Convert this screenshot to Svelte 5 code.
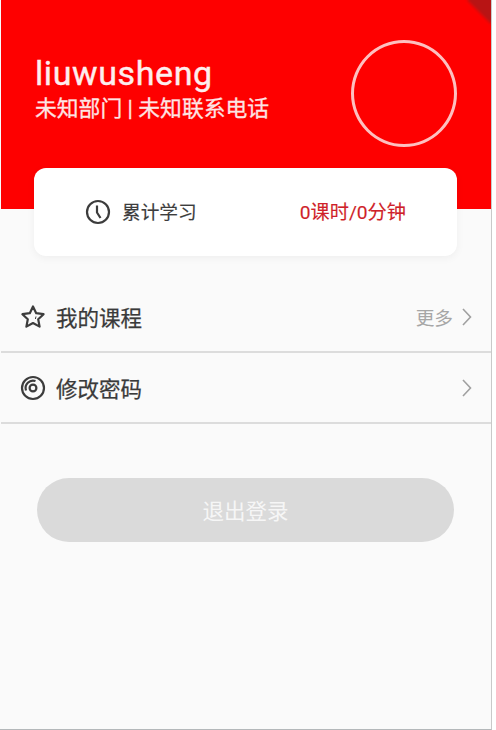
<script>
  const rows = [
    { title: "我的课程", more: "更多", icon: "star" },
    { title: "修改密码", more: "", icon: "disc" }
  ];
</script>

<div class="page">
  <header class="top">
    <span class="corner"></span>
    <div class="who">
      <div class="name">liuwusheng</div>
      <div class="dept">未知部门 | 未知联系电话</div>
    </div>
    <div class="avatar"></div>
  </header>

  <section class="card">
    <div class="card-left">
      <svg class="clock" viewBox="0 0 26 26" width="26" height="26">
        <circle cx="13" cy="13" r="11" />
        <path d="M12 6.5V13.5L15.5 19" />
      </svg>
      <span class="study">累计学习</span>
    </div>
    <div class="total">0课时/0分钟</div>
  </section>

  <ul class="list">
    {#each rows as row}
      <li class="row">
        {#if row.icon === "star"}
          <svg class="icon" viewBox="0 0 26 26" width="26" height="26">
            <path d="M13 2.5L16.2 9.2L23.6 10.2L18.2 15.3L19.6 22.6L13 19L6.4 22.6L7.8 15.3L2.4 10.2L9.8 9.2Z" />
            <path class="thin" d="M16 12.5L15.4 15" />
          </svg>
        {:else}
          <svg class="icon" viewBox="0 0 26 26" width="26" height="26">
            <circle cx="13" cy="13" r="11" />
            <path d="M6 15.5A7.5 7.5 0 0 1 15.5 6" />
            <circle cx="13" cy="13" r="3.4" />
          </svg>
        {/if}
        <span class="row-title">{row.title}</span>
        <span class="more">{row.more}</span>
        <svg class="chev" viewBox="0 0 10 18" width="10" height="18">
          <path d="M1 1L8.5 9L1 17" />
        </svg>
      </li>
    {/each}
  </ul>

  <button class="logout">退出登录</button>
</div>

<style>
  :global(body) {
    margin: 0;
    background: #fff;
  }

  .page {
    position: relative;
    box-sizing: border-box;
    width: 492px;
    height: 730px;
    padding-left: 1px;
    background: #fafafa;
    border-right: 1px solid #c9c9c9;
    border-bottom: 1px solid #b4b8ba;
    font-family: Roboto, "Noto Sans CJK SC", sans-serif;
    overflow: hidden;
  }

  .top {
    position: relative;
    box-sizing: border-box;
    height: 209px;
    padding: 40px 34px 0 34px;
    background: #fe0000;
    display: flex;
    justify-content: space-between;
    align-items: flex-start;
    overflow: hidden;
  }

  .corner {
    position: absolute;
    top: -17px;
    right: -17px;
    width: 34px;
    height: 34px;
    background: #b81414;
    filter: blur(1.5px);
    transform: rotate(45deg);
  }

  .who {
    padding-top: 13px;
    color: #fff;
  }

  .name {
    font-size: 34px;
    line-height: 40px;
    letter-spacing: 0.6px;
    color: #fdeeee;
    -webkit-text-stroke: 0.4px #fdeeee;
  }

  .dept {
    font-size: 21.8px;
    line-height: 31px;
    color: #fde4e4;
    -webkit-text-stroke: 0.3px #fde4e4;
  }

  .avatar {
    box-sizing: border-box;
    width: 106px;
    height: 107px;
    border-radius: 50%;
    border: 3px solid #fdc0c0;
  }

  .card {
    box-sizing: border-box;
    width: 423px;
    height: 88px;
    margin: -41px 0 0 33px;
    padding: 0 51px 0 51px;
    position: relative;
    display: flex;
    justify-content: space-between;
    align-items: center;
    background: #fff;
    border-radius: 12px;
    box-shadow: 0 2px 8px rgba(0, 0, 0, 0.05);
  }

  .card-left {
    display: flex;
    align-items: center;
    gap: 11px;
    font-size: 18.7px;
    color: #3d3d3d;
  }

  .study {
    padding-bottom: 3px;
    -webkit-text-stroke: 0.15px #3d3d3d;
  }

  .clock,
  .icon {
    fill: none;
    stroke: #3c3c3c;
    stroke-width: 2.2;
    stroke-linejoin: round;
    flex-shrink: 0;
  }

  .thin {
    stroke-width: 1;
  }

  .total {
    padding-bottom: 2px;
    font-size: 19.2px;
    color: #cf1f2a;
    -webkit-text-stroke: 0.15px #cf1f2a;
  }

  .list {
    list-style: none;
    margin: 26px 0 0;
    padding: 0;
  }

  .row {
    box-sizing: border-box;
    height: 71px;
    padding: 0 19px 0 19px;
    display: flex;
    align-items: center;
    border-bottom: 2px solid #dcdcdc;
  }

  .row-title {
    margin-left: 10px;
    font-size: 21.5px;
    color: #3a3a3a;
    -webkit-text-stroke: 0.25px #3a3a3a;
    flex: 1;
  }

  .more {
    font-size: 18.7px;
    color: #a6a6a6;
    margin-right: 9px;
  }

  .chev {
    fill: none;
    stroke: #a0a0a0;
    stroke-width: 1.6;
  }

  .logout {
    display: block;
    width: 417px;
    height: 64px;
    margin: 54px 0 0 36px;
    padding: 0 0 2px;
    border: none;
    border-radius: 32px;
    background: #dadada;
    color: #f6f6f6;
    font-family: inherit;
    font-size: 21.5px;
  }
</style>
